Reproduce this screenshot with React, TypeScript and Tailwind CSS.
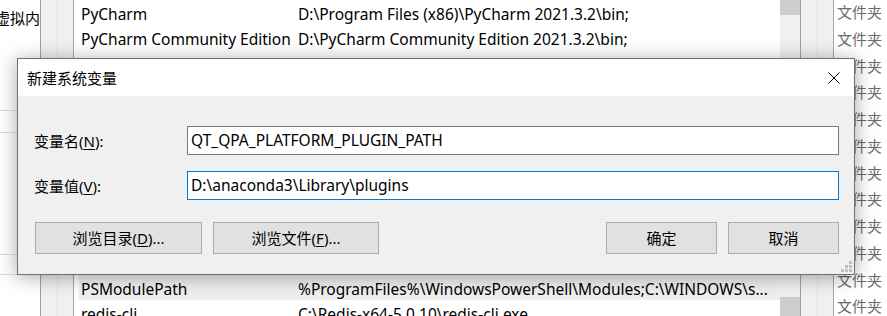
import React from 'react'

const font = "font-['Noto_Sans','Noto_Sans_CJK_SC',sans-serif]"

type Row = { name: string; value: string; selected?: boolean }

const rows: Row[] = [
	{ name: 'PyCharm', value: 'D:\\Program Files (x86)\\PyCharm 2021.3.2\\bin;' },
	{ name: 'PyCharm Community Edition', value: 'D:\\PyCharm Community Edition 2021.3.2\\bin;' },
	{ name: 'redis', value: 'C:\\Redis-x64-5.0.10' },
	{ name: '', value: '' },
	{ name: '', value: '' },
	{ name: '', value: '' },
	{ name: '', value: '' },
	{ name: '', value: '' },
	{ name: '', value: '' },
	{ name: '', value: '' },
	{ name: '', value: '' },
	{
		name: 'PSModulePath',
		value: '%ProgramFiles%\\WindowsPowerShell\\Modules;C:\\WINDOWS\\s...',
		selected: true,
	},
	{ name: 'redis-cli', value: 'C:\\Redis-x64-5.0.10\\redis-cli.exe' },
]

const Key = ({ k }: { k: string }) => <span className="underline underline-offset-2">{k}</span>

const WinButton = ({ width, children }: { width: string; children: React.ReactNode }) => (
	<button
		className={`${width} h-[32px] border border-[#adadad] bg-[#e1e1e1] text-[15px] text-black flex items-center justify-center`}
	>
		{children}
	</button>
)

const CloseIcon = () => (
	<svg width="12" height="12" viewBox="0 0 12 12">
		<path d="M0.5 0.5 L11.5 11.5 M11.5 0.5 L0.5 11.5" stroke="#000" strokeWidth="1" />
	</svg>
)

const Grip = () => (
	<svg width="11" height="11" viewBox="0 0 11 11">
		<g fill="#bfbfbf">
			<rect x="8" y="0" width="3" height="3" />
			<rect x="4" y="4" width="3" height="3" />
			<rect x="8" y="4" width="3" height="3" />
			<rect x="0" y="8" width="3" height="3" />
			<rect x="4" y="8" width="3" height="3" />
			<rect x="8" y="8" width="3" height="3" />
		</g>
	</svg>
)

const Dialog = () => (
	<div className="absolute left-[17px] top-[58px] w-[838px] h-[217px] border border-[#6f6f6f] bg-[#f0f0f0] flex flex-col shadow-[0_2px_18px_rgba(0,0,0,0.35)]">
		<div className="h-[37px] bg-white flex items-center justify-between pl-[9px] pr-[14px]">
			<span className="text-[15px] text-black pt-[1px]">新建系统变量</span>
			<CloseIcon />
		</div>
		<div className="flex-1 flex flex-col pl-[16px] pr-[15px] pt-[30px] relative">
			<div className="flex items-center">
				<label className="w-[153px] text-[15px] text-black pt-[2px]">
					变量名(<Key k="N" />):
				</label>
				<div className="flex-1 h-[29px] border border-[#7a7a7a] bg-white flex items-center pl-[3px] text-[15.5px] text-black">
					QT_QPA_PLATFORM_PLUGIN_PATH
				</div>
			</div>
			<div className="flex items-center mt-[16px]">
				<label className="w-[153px] text-[15px] text-black pt-[2px]">
					变量值(<Key k="V" />):
				</label>
				<div className="flex-1 h-[29px] border border-[#0078d7] bg-white flex items-center pl-[3px] text-[15.5px] text-black">
					D:\anaconda3\Library\plugins
				</div>
			</div>
			<div className="flex items-center mt-[22px] pl-[1px]">
				<WinButton width="w-[167px]">
					浏览目录(<Key k="D" />)...
				</WinButton>
				<div className="ml-[11px]">
					<WinButton width="w-[166px]">
						浏览文件(<Key k="F" />)...
					</WinButton>
				</div>
				<div className="ml-auto flex gap-[11px]">
					<WinButton width="w-[111px]">确定</WinButton>
					<WinButton width="w-[111px]">取消</WinButton>
				</div>
			</div>
			<div className="absolute right-[2px] bottom-[2px]">
				<Grip />
			</div>
		</div>
	</div>
)

export default function App() {
	return (
		<div className={`relative w-[887px] h-[316px] overflow-hidden bg-white ${font}`}>
			<div className="flex h-full">
				{/* performance options window, left edge */}
				<div className="w-[40px] flex flex-col text-[15px] text-black">
					<div className="h-[111px] border-b border-[#dcdcdc] pt-[7px] whitespace-nowrap -ml-[5px]">
						虚拟内存
					</div>
					<div className="h-[22px] border-b border-[#dcdcdc]" />
					<div className="h-[122px] border-b border-[#dcdcdc]" />
					<div className="h-[20px] border-b border-[#dcdcdc]" />
				</div>

				{/* environment variables window */}
				<div className="w-[17px] border-l border-[#a0a0a0] bg-[#f0f0f0]" />
				<div className="w-[16px] border-l border-[#e3e3e3] bg-[#f0f0f0]" />
				<div className="w-[707px] border-l border-[#a7a7a7] bg-white text-[15.5px] text-black">
					{rows.map((r, i) => (
						<div
							key={i}
							className={`h-[25px] ml-[5px] flex whitespace-nowrap overflow-hidden leading-[29px] ${
								r.selected ? 'bg-[#efefef]' : ''
							}`}
						>
							<span className="w-[219px] pl-[2px]">{r.name}</span>
							<span>{r.value}</span>
						</div>
					))}
				</div>
				<div className="w-[20px] bg-[#f0f0f0] flex flex-col justify-between">
					<div className="h-[15px] bg-[#cdcdcd]" />
					<div className="h-[19px] bg-[#cdcdcd]" />
				</div>
				<div className="w-[17px] border-l border-[#a0a0a0] bg-[#f0f0f0]" />
				<div className="w-[16px] border-l border-[#e3e3e3] bg-[#f0f0f0]" />

				{/* explorer window behind, right edge */}
				<div className="flex-1 border-l border-[#a7a7a7] bg-white pl-[3px] -mt-[1px] text-[15px] text-[#6b6b6b] leading-[26.75px] whitespace-nowrap">
					{Array.from({ length: 12 }).map((_, i) => (
						<div key={i}>文件夹</div>
					))}
				</div>
			</div>

			<Dialog />
		</div>
	)
}
